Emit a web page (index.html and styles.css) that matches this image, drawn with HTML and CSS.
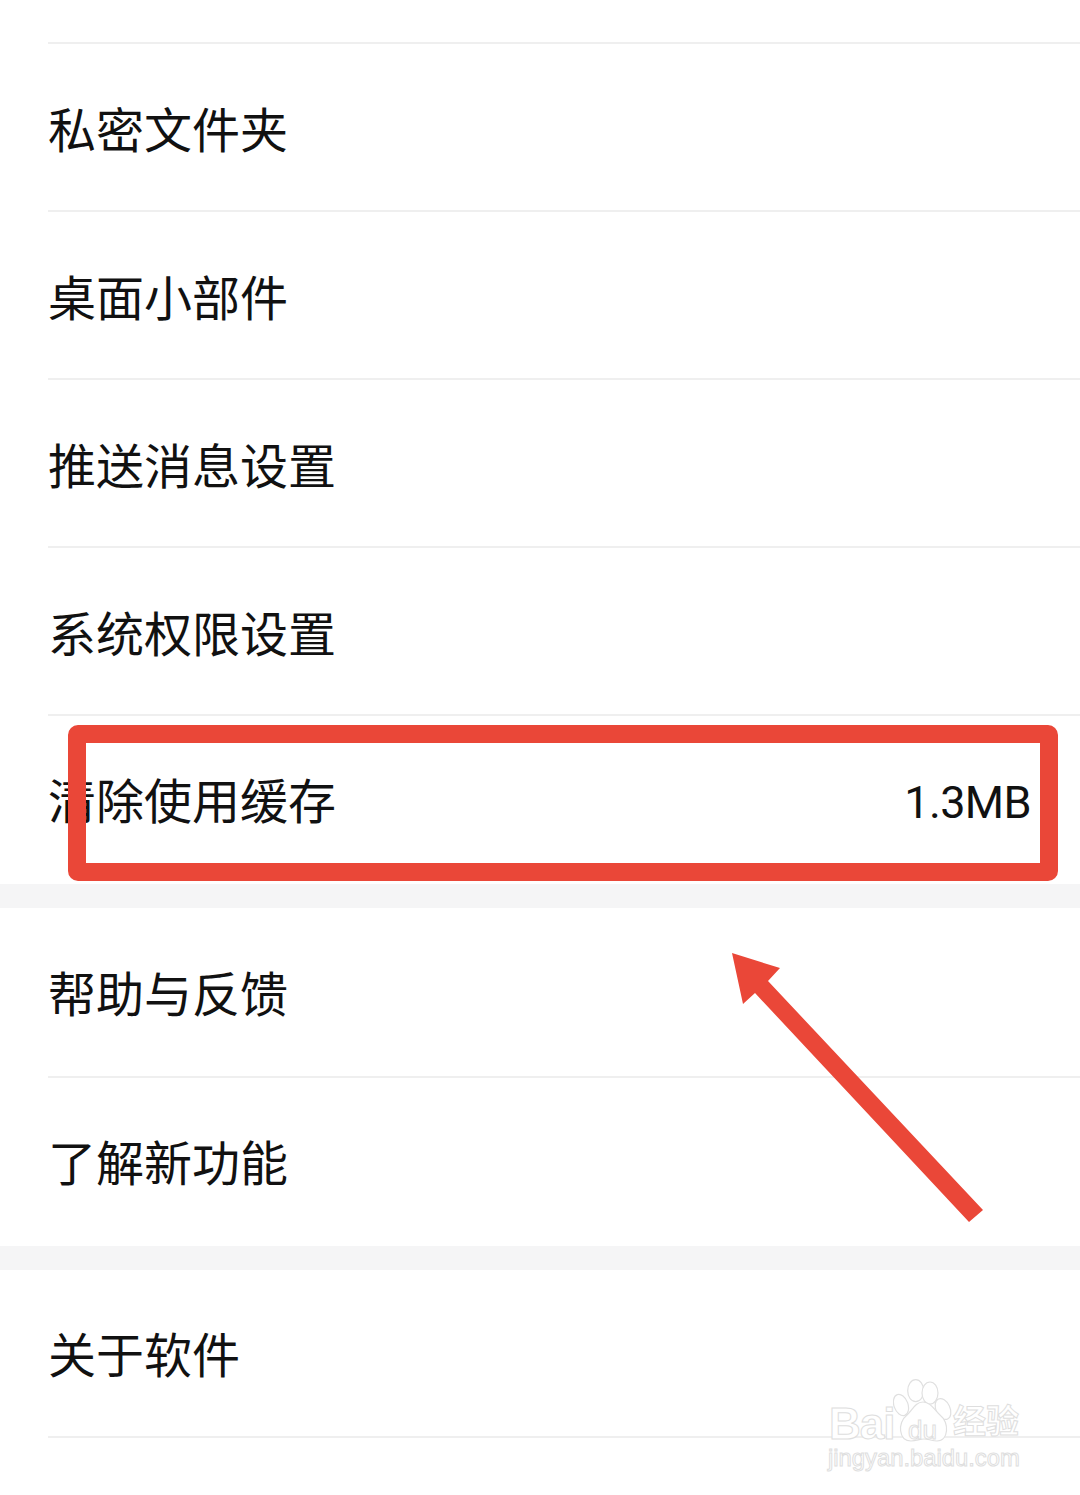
FILE: index.html
```html
<!DOCTYPE html>
<html lang="zh-CN">
<head>
<meta charset="utf-8">
<title>设置</title>
<link rel="stylesheet" href="styles.css">
</head>
<body>
<main class="page">
  <section class="group group-first">
    <div class="row"><span>私密文件夹</span></div>
    <div class="row"><span>桌面小部件</span></div>
    <div class="row"><span>推送消息设置</span></div>
    <div class="row"><span>系统权限设置</span></div>
    <div class="row row-last"><span>清除使用缓存</span><span class="value">1.3MB</span></div>
  </section>
  <section class="group">
    <div class="row row-open"><span>帮助与反馈</span></div>
    <div class="row row-last"><span>了解新功能</span></div>
  </section>
  <section class="group">
    <div class="row row-about"><span>关于软件</span></div>
    <div class="row row-tail"></div>
  </section>
  <div class="highlight"></div>
  <svg class="arrow" width="1080" height="1495" viewBox="0 0 1080 1495">
    <polygon points="732,953 780,968 768,981 983,1210 969,1222 755,993 743,1004" fill="#ea4738"/>
  </svg>
  <div class="mark">
    <svg class="paw" width="60" height="63" viewBox="0 0 60 63">
      <g fill="#fff" stroke="#e0e0e0" stroke-width="1.2">
        <ellipse cx="8" cy="26" rx="7" ry="11" transform="rotate(-20 8 26)"/>
        <ellipse cx="22.7" cy="11.7" rx="8" ry="11"/>
        <ellipse cx="37" cy="14" rx="8" ry="11"/>
        <ellipse cx="50" cy="30" rx="7" ry="11" transform="rotate(-25 50 30)"/>
        <path d="M30 23C22 23 19 32 13 37C5 43 5 62 18 62C24 62 26 60 31 60C36 60 39 62 44 62C56 62 56 43 48 37C42 32 38 23 30 23Z"/>
      </g>
    </svg>
    <span class="mark-bai">Bai</span>
    <span class="mark-du">du</span>
    <span class="mark-cn">经验</span>
    <span class="mark-url">jingyan.baidu.com</span>
  </div>
</main>
</body>
</html>
```

FILE: styles.css
```css
* { box-sizing: border-box; }
html, body { margin: 0; background: #fff; }
body { width: 1080px; height: 1495px; overflow: hidden; }
.page {
  position: relative;
  width: 1080px;
  height: 1495px;
  padding-top: 44px;
  background: #fff;
  font-family: "Noto Sans CJK SC", "Noto Sans", sans-serif;
  color: #111;
}
.group { background: #fff; border-bottom: 24px solid #f5f5f6; padding-left: 48px; }
.group:last-of-type { border-bottom: 0; }
.group-first { position: relative; }
.group-first::before {
  content: "";
  position: absolute;
  left: 48px;
  right: 0;
  top: -2px;
  height: 2px;
  background: #efefef;
}
.row {
  height: 168px;
  display: flex;
  align-items: center;
  justify-content: space-between;
  padding-right: 49px;
  border-bottom: 2px solid #efefef;
  font-size: 48px;
  line-height: 1;
  font-weight: 400;
}
.row-last { border-bottom: 0; height: 168px; padding-bottom: 4px; }
.row-open { height: 170px; padding-bottom: 3px; }
.row-about { height: 168px; padding-bottom: 3px; }
.row-tail { border-bottom: 0; height: 56px; }
.value { font-family: Roboto, sans-serif; font-weight: 400; font-size: 45px; letter-spacing: -0.6px; padding-top: 8px; }
.highlight {
  position: absolute;
  left: 68px;
  top: 725px;
  width: 990px;
  height: 156px;
  border: 18px solid #ea4738;
  border-radius: 10px;
}
.arrow { position: absolute; left: 0; top: 0; }
.mark { position: absolute; left: 820px; top: 1375px; width: 220px; height: 100px; color: #fff; }
.mark span { position: absolute; line-height: 1; -webkit-text-stroke: 1px #dedede; }
.paw { position: absolute; left: 73px; top: 4px; }
.mark-bai { left: 9px; top: 27px; font: 700 44px "Liberation Sans", sans-serif; letter-spacing: -1px; }
.mark-du { left: 88px; top: 42px; font: 400 26px "Liberation Sans", sans-serif; }
.mark-cn { left: 133px; top: 28px; font: 700 33px "Noto Sans CJK SC", sans-serif; }
.mark-url { left: 8px; top: 71px; font: 400 23.8px "Liberation Sans", sans-serif; }
```
